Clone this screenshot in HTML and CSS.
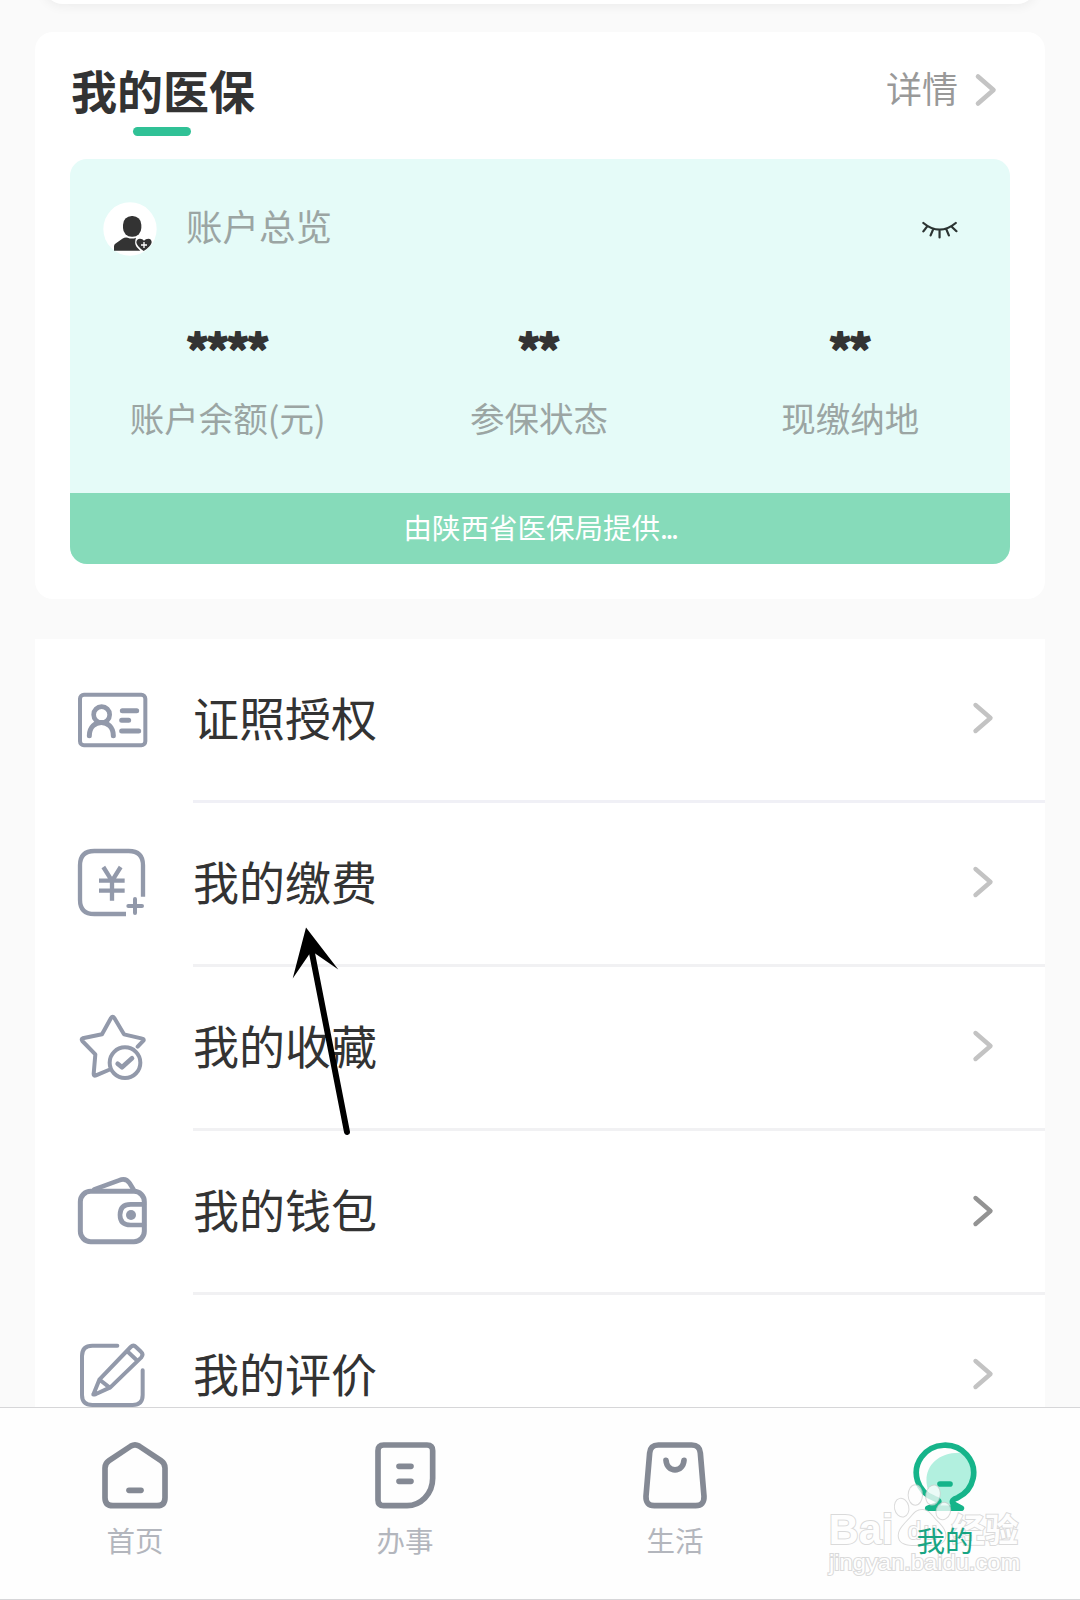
FILE: index.html
```html
<!DOCTYPE html>
<html lang="zh-CN">
<head>
<meta charset="utf-8">
<title>我的</title>
<link rel="stylesheet" href="styles.css">
</head>
<body>
<div class="screen">
  <main class="content">
    <div class="prev-card"></div>

    <section class="card">
      <header class="card-head">
        <h2 class="card-title">我的医保</h2>
        <a class="more">详情
          <svg class="more-chevron" viewBox="0 0 24 36"><path d="M4 4.500L19.500 18L4 31.500"/></svg>
        </a>
      </header>
      <div class="account">
        <div class="account-head">
          <svg class="avatar" viewBox="100 37 162 162">
            <circle cx="181" cy="118" r="80" fill="#fff"/>
            <rect x="160" y="79" width="55" height="62" rx="26" fill="#333"/>
            <path d="M133 183V169Q133 163 141 159L158 147Q166 142 174 144Q187 149 199 144Q193 160 201 172L212 183Z" fill="#333"/>
            <path d="M222 184Q201 170 200 158Q201 147 211 147Q219 147 223 153Q228 147 236 147Q246 148 246 158Q245 170 222 184Z" fill="#333"/>
            <path d="M214 166H232M223 157V175" stroke="#fff" stroke-width="4"/>
          </svg>
          <span class="account-name">账户总览</span>
          <svg class="eye" viewBox="1109 662 104.500 58" preserveAspectRatio="none">
            <path d="M1113 668Q1160 709 1207 668M1123 680L1113 694M1141 688L1134 706M1160 691V712M1180 688L1187 706M1196 680L1209 693"/>
          </svg>
        </div>
        <div class="stats">
          <div class="stat"><b class="stat-value">****</b><span class="stat-label">账户余额(元)</span></div>
          <div class="stat"><b class="stat-value">**</b><span class="stat-label">参保状态</span></div>
          <div class="stat"><b class="stat-value">**</b><span class="stat-label">现缴纳地</span></div>
        </div>
        <div class="provider">由陕西省医保局提供<span class="dots">...</span></div>
      </div>
    </section>

    <ul class="menu">
      <li class="row">
        <svg class="row-icon" viewBox="138 159 219 219">
          <rect x="150" y="194" width="196" height="152" rx="12" stroke-width="12"/>
          <circle cx="215" cy="254" r="24" stroke-width="14"/>
          <path d="M178 317C178 264 250 264 250 317M277 242H320M275 271H296M275 303H326" stroke-width="15"/>
        </svg>
        <div class="row-body cool"><span class="row-label">证照授权</span><svg class="chevron" viewBox="0 0 22 34"><path d="M3.500 4L18.500 17L3.500 30"/></svg></div>
      </li>
      <li class="row">
        <svg class="row-icon butt" viewBox="138 651 219 219">
          <path d="M288 852H193Q150 852 150 809V706Q150 663 193 663H296Q339 663 339 706V800" stroke-width="13"/>
          <path d="M220 711L246 753L272 711M246 753V812M207 752H284M207 782H284" stroke-width="13"/>
          <path d="M295 828H336M315 807V849" stroke-width="12" stroke-linecap="round"/>
        </svg>
        <div class="row-body"><span class="row-label">我的缴费</span><svg class="chevron" viewBox="0 0 22 34"><path d="M3.500 4L18.500 17L3.500 30"/></svg></div>
      </li>
      <li class="row">
        <svg class="row-icon" viewBox="138 213 219 219">
          <path d="M323 320L341 301Q342 297 337 296L282 283L253 234Q248 226 243 234L216 283L158 295Q153 297 157 303L196 343L191 402Q191 409 198 406L236 390" stroke-width="12"/>
          <circle cx="285" cy="368" r="46" stroke-width="12"/>
          <path d="M263 371L276 382L306 355" stroke-width="14"/>
        </svg>
        <div class="row-body"><span class="row-label">我的收藏</span><svg class="chevron" viewBox="0 0 22 34"><path d="M3.500 4L18.500 17L3.500 30"/></svg></div>
      </li>
      <li class="row">
        <svg class="row-icon" viewBox="138 705 219 219">
          <rect x="151" y="754" width="192" height="151" rx="31" stroke-width="15"/>
          <path d="M342 793H302Q270 793 270 825Q270 855 302 855H342" stroke-width="14"/>
          <path d="M193 748L267 721Q288 712 299 730L310 748" stroke-width="14"/>
          <circle cx="303" cy="825" r="15" class="solid"/>
        </svg>
        <div class="row-body"><span class="row-label">我的钱包</span><svg class="chevron dark" viewBox="0 0 22 34"><path d="M3.500 4L18.500 17L3.500 30"/></svg></div>
      </li>
      <li class="row">
        <svg class="row-icon" viewBox="138 207 219 219">
          <path d="M262 227H187Q156 227 156 258V375Q156 405 187 405H308Q338 405 338 375V301" stroke-width="12"/>
          <path d="M191 371L208 329L302 231Q310 223 318 231L333 245Q342 253 334 262L241 352L198 372Q187 376 191 371ZM291 243L322 272M210 330L239 353" stroke-width="12"/>
        </svg>
        <div class="row-body"><span class="row-label">我的评价</span><svg class="chevron" viewBox="0 0 22 34"><path d="M3.500 4L18.500 17L3.500 30"/></svg></div>
      </li>
    </ul>
  </main>

  <nav class="tabs">
    <a class="tab">
      <svg class="tab-icon" viewBox="207 507 216 216">
        <path d="M303 528Q315 521 327 528L393 572Q405 580 405 594V683Q405 707 381 707H249Q225 707 225 683V594Q225 580 237 572Z"/>
        <path d="M297 661H333"/>
      </svg>
      <span>首页</span>
    </a>
    <a class="tab">
      <svg class="tab-icon" viewBox="87 147 216 216">
        <path d="M131 165H261Q278 165 278 182V265C278 313 241 347 201 347H131Q114 347 114 330V182Q114 165 131 165Z"/>
        <path d="M177 229H213M177 274H213"/>
      </svg>
      <span>办事</span>
    </a>
    <a class="tab">
      <svg class="tab-icon" viewBox="897 147 216 216">
        <path d="M955 165H1055Q1079 165 1081 189L1092 319Q1093 347 1067 347H943Q917 347 918 319L929 189Q931 165 955 165Z"/>
        <path d="M978 211C981 249 1029 249 1032 211"/>
      </svg>
      <span>生活</span>
    </a>
    <a class="tab active">
      <svg class="tab-icon" viewBox="387 144 216 216">
        <path class="tint" d="M556 186A86 86 0 0 1 533 322L512 330L514 345H474L478 326L446 302C422 240 464 176 556 186Z"/>
        <path d="M443 352L474 340Q482 327 464 323A86 83 0 1 1 533 320Q512 326 519 338L544 352Z"/>
        <path d="M480 279H510"/>
      </svg>
      <span class="tab-label">我的</span>
    </a>
  </nav>

  <svg class="arrow" viewBox="290 924 64 214">
    <path d="M311 948L347 1132" class="shaft"/>
    <path d="M306 927.500L338.300 969.500L311.500 951L292.700 978.500Z"/>
  </svg>

  <svg class="watermark" viewBox="145 280 580 285">
    <g class="mark">
      <ellipse cx="366" cy="354" rx="20" ry="27" transform="rotate(-12 366 354)"/>
      <ellipse cx="407" cy="316" rx="20" ry="29"/>
      <ellipse cx="460" cy="316" rx="20" ry="29" transform="rotate(12 460 316)"/>
      <ellipse cx="491" cy="364" rx="20" ry="25" transform="rotate(20 491 364)"/>
      <path d="M428 361C448 361 456 378 468 391C488 410 505 430 494 450C484 468 455 466 428 466C400 466 370 468 360 450C350 428 368 410 385 392C400 378 406 361 428 361Z"/>
      <text x="147" y="463" font-size="130" textLength="194" lengthAdjust="spacingAndGlyphs" class="bold">Bai</text>
      <text x="384" y="448" font-size="72" textLength="88">du</text>
      <text x="516" y="457" font-size="100" textLength="200" class="bold">经验</text>
      <text x="148" y="541" font-size="64" textLength="574" lengthAdjust="spacingAndGlyphs">jingyan.baidu.com</text>
    </g>
  </svg>
</div>
</body>
</html>
```
FILE: styles.css
```css
* { box-sizing: border-box; }

body {
  margin: 0;
  background: #fafafa;
  color: #333;
  font-family: "Noto Sans CJK SC", sans-serif;
}

.screen {
  position: relative;
  width: 1080px;
  height: 1600px;
  display: flex;
  flex-direction: column;
  overflow: hidden;
}

.content {
  height: 1407px;
  padding: 0 35px;
  overflow: hidden;
}

.prev-card {
  height: 40px;
  margin: -36px 8px 0;
  border-radius: 20px;
  background: #fff;
  box-shadow: 0 2px 12px rgba(0, 0, 0, 0.06);
}

.card {
  height: 567px;
  margin-top: 28px;
  padding: 0 35px;
  border-radius: 18px;
  background: #fff;
}

.card-head {
  display: flex;
  justify-content: space-between;
  height: 127px;
  padding: 30px 12px 0 1px;
}

.card-title {
  display: flex;
  flex-direction: column;
  align-items: center;
  height: 76px;
  margin: 0;
  font-size: 46px;
  line-height: 54px;
  font-weight: 700;
}

.card-title::after {
  content: "";
  width: 58px;
  height: 9px;
  margin-top: 11px;
  margin-right: 2px;
  border-radius: 5px;
  background: #30c196;
}

.more {
  display: flex;
  align-items: center;
  gap: 16px;
  height: 50px;
  color: #999;
  font-size: 36px;
  line-height: 48px;
}

.more-chevron {
  width: 24px;
  height: 36px;
  margin-top: 6px;
  fill: none;
  stroke: #c4c4c4;
  stroke-width: 4.6;
  stroke-linecap: round;
  stroke-linejoin: round;
}

.account {
  height: 405px;
  border-radius: 17px;
  background: #e5fbf8;
  overflow: hidden;
}

.account-head {
  display: flex;
  align-items: center;
  height: 140px;
  padding: 0 52px 0 33px;
}

.avatar {
  width: 54px;
  height: 54px;
}

.account-name {
  margin: -6px 0 0 29px;
  color: #9ba5a3;
  font-size: 36.5px;
  line-height: 50px;
}

.eye {
  width: 36px;
  height: 19px;
  margin: 2px 0 0 auto;
  fill: none;
  stroke: #2c3433;
  stroke-width: 6.4;
  stroke-linecap: round;
}

.stats {
  display: grid;
  grid-template-columns: repeat(3, 1fr);
  height: 194px;
  padding: 0 4px 0 2px;
}

.stat {
  display: flex;
  flex-direction: column;
  align-items: center;
}

.stat-value {
  height: 93px;
  margin-right: 3px;
  padding-top: 23px;
  font-size: 46px;
  line-height: 54px;
  letter-spacing: -3.1px;
  -webkit-text-stroke: 2px currentColor;
}

.stat-label {
  color: #9ba5a3;
  font-size: 34.5px;
  line-height: 50px;
}

.provider {
  height: 71px;
  background: #86dbba;
  color: #fff;
  font-size: 28.5px;
  line-height: 68px;
  text-align: center;
}

.dots { letter-spacing: -2.5px; }

.menu {
  margin: 40px 0 0;
  padding: 0 0 0 41px;
  background: #fff;
  list-style: none;
}

.row {
  display: flex;
  gap: 44px;
  height: 164px;
}

.row-icon {
  flex: none;
  width: 73px;
  height: 73px;
  margin-top: 44px;
  fill: none;
  stroke: #9299aa;
  stroke-linecap: round;
  stroke-linejoin: round;
}

.row-icon.butt { stroke-linecap: butt; stroke-linejoin: miter; }
.row-icon .solid { fill: #9299aa; stroke: none; }

.row-body {
  flex: 1;
  display: flex;
  align-items: center;
  justify-content: space-between;
  padding-right: 51px;
  border-bottom: 3px solid #f1f1f3;
  font-size: 46px;
  line-height: 60px;
}

.row-body.cool { border-color: #f0f0f6; }

.row-label { margin-top: -8px; }

.chevron {
  width: 22px;
  height: 34px;
  margin-top: -4px;
  fill: none;
  stroke: #c3c3c3;
  stroke-width: 4.4;
  stroke-linecap: round;
  stroke-linejoin: round;
}

.chevron.dark {
  margin-top: -2px;
  stroke: #939393;
}

.tabs {
  display: grid;
  grid-template-columns: repeat(4, 1fr);
  height: 193px;
  border-top: 1px solid #d6d6d8;
  border-bottom: 1px solid #d6d6d8;
  background: #fefefe;
}

.tab {
  display: flex;
  flex-direction: column;
  align-items: center;
  padding-top: 31px;
  color: #b3b6bd;
  font-size: 28.5px;
  line-height: 40px;
}

.tab-icon {
  width: 72px;
  height: 72px;
  margin-bottom: 9px;
  fill: none;
  stroke: #848994;
  stroke-width: 17;
  stroke-linecap: round;
  stroke-linejoin: round;
}

.tab.active { color: #18a583; }
.active .tab-icon { stroke: #16b48a; }
.active .tint { fill: #b2f0df; stroke: none; }

.tab-label {
  position: relative;
  z-index: 2;
}

/* Guide arrow laid over the list */
.arrow {
  position: absolute;
  left: 290px;
  top: 924px;
  width: 64px;
  height: 214px;
}

.arrow .shaft {
  stroke: #000;
  stroke-width: 6;
  stroke-linecap: round;
}

/* Site watermark laid over the tab bar, under the tab's label */
.watermark {
  position: absolute;
  z-index: 1;
  left: 828.3px;
  top: 1483.3px;
  width: 193.3px;
  height: 95px;
  overflow: visible;
}

.mark {
  fill: #fff;
  stroke: #cfcfcf;
  stroke-width: 6;
  paint-order: stroke;
  opacity: 0.75;
  font-family: "Liberation Sans", "Noto Sans CJK SC", sans-serif;
}

.mark .bold { font-weight: 700; }
```
